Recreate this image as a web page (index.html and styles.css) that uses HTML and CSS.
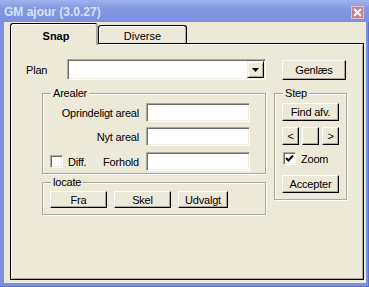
FILE: index.html
```html
<!DOCTYPE html>
<html lang="da">
<head>
    <meta charset="UTF-8" />
    <title>GM ajour (3.0.27)</title>
    <link rel="stylesheet" href="styles.css">
</head>
<body>
<div class="window">
    <div class="titlebar">
        <span class="title">GM ajour (3.0.27)</span>
        <span class="close">
            <svg width="9" height="9" viewBox="0 0 9 9"><path d="M1 1 L8 8 M8 1 L1 8" stroke="#fff" stroke-width="2"/></svg>
        </span>
    </div>

    <div class="client">
        <div class="tabs">
            <div class="tab active">Snap</div>
            <div class="tab">Diverse</div>
        </div>

        <div class="pane">
            <div class="plan-row">
                <span class="plan-label">Plan</span>
                <div class="combo">
                    <div class="combo-btn">
                        <svg width="7" height="4" viewBox="0 0 7 4"><polygon points="0,0 7,0 3.5,4" fill="#000"/></svg>
                    </div>
                </div>
                <button class="btn genlaes">Genlæs</button>
            </div>

            <div class="main-row">
                <div class="left-col">
                    <div class="group arealer">
                        <span class="group-title">Arealer</span>
                        <div class="field">
                            <span class="lbl">Oprindeligt areal</span>
                            <input class="edit" type="text">
                        </div>
                        <div class="field">
                            <span class="lbl">Nyt areal</span>
                            <input class="edit" type="text">
                        </div>
                        <div class="field last">
                            <span class="lbl split">
                                <span class="check-wrap"><span class="check"></span>Diff.</span>
                                <span>Forhold</span>
                            </span>
                            <input class="edit" type="text">
                        </div>
                    </div>

                    <div class="group locate">
                        <span class="group-title">locate</span>
                        <div class="btn-row">
                            <button class="btn w57">Fra</button>
                            <button class="btn w57">Skel</button>
                            <button class="btn w50">Udvalgt</button>
                        </div>
                    </div>
                </div>

                <div class="group step">
                    <span class="group-title">Step</span>
                    <button class="btn w57">Find afv.</button>
                    <div class="arrows">
                        <button class="btn small">&lt;</button>
                        <button class="btn small"></button>
                        <button class="btn small">&gt;</button>
                    </div>
                    <div class="check-wrap zoom">
                        <span class="check">
                            <svg width="9" height="9" viewBox="0 0 9 9"><path d="M1 4 L3.5 6.5 L8 1.5" stroke="#000" stroke-width="2" fill="none"/></svg>
                        </span>Zoom
                    </div>
                    <button class="btn w57 accept">Accepter</button>
                </div>
            </div>
        </div>
    </div>
</div>
</body>
</html>
```

FILE: styles.css
```css
body {
    margin: 0;
    background: #7a8fde;
    font-family: "Liberation Sans", Arial, sans-serif;
    font-size: 11px;
    color: #000;
}
.window {
    width: 369px;
    height: 287px;
    box-sizing: border-box;
    padding: 0 3px 4px 4px;
    background: #7b8fde;
    box-shadow: inset -1px -1px #5d70c8;
    display: flex;
    flex-direction: column;
}
.titlebar {
    height: 22px;
    margin: 0 -3px 0 -4px;
    padding: 0 5px 0 4px;
    display: flex;
    align-items: flex-start;
    background: linear-gradient(#9fb1ee, #8498e2 40%, #7b90de);
}
.title {
    margin-top: 5px;
    font-size: 12px;
    font-weight: bold;
    color: #d8e2f8;
}
.close {
    margin: 6px 0 0 auto;
    width: 13px;
    height: 13px;
    box-sizing: border-box;
    background: #c5808d;
    border: 1px solid #e2bcc6;
    display: flex;
    align-items: center;
    justify-content: center;
}
.client {
    flex: 1;
    background: #ece9d8;
}

/* tabs */
.tabs {
    display: flex;
    align-items: flex-end;
    height: 21px;
    margin-left: 6px;
}
.tab {
    box-sizing: border-box;
    text-align: center;
    background: #ece9d8;
    border-radius: 3px 3px 0 0;
}
.tab.active {
    position: relative;
    z-index: 1;
    width: 88px;
    height: 22px;
    margin-bottom: -2px;
    padding: 6px 0 0 5px;
    font-weight: bold;
    border-left: 1px solid #000;
    border-top: 1px solid #000;
    border-right: 2px solid #aca899;
    box-shadow: inset 1px 1px #fff;
}
.tab:not(.active) {
    width: 89px;
    height: 18px;
    padding-top: 4px;
    border: 1px solid #000;
    border-bottom: none;
    box-shadow: inset -1px 0 #aca899, inset 1px 1px #fff;
}
.pane {
    width: 354px;
    height: 237px;
    margin-left: 6px;
    box-sizing: border-box;
    border: 1px solid #000;
    box-shadow: inset 1px 1px #fff, inset -1px -1px #aca899;
    letter-spacing: -0.2px;
}

/* plan row */
.plan-row {
    display: flex;
    align-items: center;
    margin-top: 15px;
    padding-left: 15px;
}
.plan-label {
    width: 41px;
}
.combo {
    width: 199px;
    height: 21px;
    box-sizing: border-box;
    background: #fff;
    border: 1px solid;
    border-color: #aca899 #fff #fff #aca899;
    box-shadow: inset 1px 1px #716f64, inset -1px -1px #f1efe2;
    display: flex;
    justify-content: flex-end;
    padding: 1px;
}
.combo-btn {
    width: 17px;
    height: 17px;
    box-sizing: border-box;
    background: #ece9d8;
    border: 1px solid;
    border-color: #f1efe2 #000 #000 #f1efe2;
    box-shadow: inset 1px 1px #fff, inset -1px -1px #aca899;
    display: flex;
    align-items: center;
    justify-content: center;
}

/* buttons */
.btn {
    box-sizing: border-box;
    height: 18px;
    padding: 0;
    font: inherit;
    letter-spacing: inherit;
    background: #ece9d8;
    border: 1px solid;
    border-color: #fff #000 #000 #fff;
    box-shadow: inset -1px -1px #aca899;
}
.genlaes {
    width: 64px;
    height: 20px;
    margin-left: 16px;
}
.w57 { width: 57px; }
.w50 { width: 50px; }
.small { width: 17px; }

/* group boxes */
.main-row {
    display: flex;
    align-items: flex-start;
    gap: 8px;
    margin-top: 13px;
    padding-left: 31px;
}
.left-col {
    display: flex;
    flex-direction: column;
    gap: 8px;
}
.group {
    position: relative;
    box-sizing: border-box;
    border: 1px solid #aca899;
    box-shadow: inset 1px 1px #fff, 1px 1px #fff;
}
.group-title {
    position: absolute;
    top: -7px;
    left: 8px;
    padding: 0 2px;
    background: #ece9d8;
    line-height: 13px;
}
.arealer {
    width: 224px;
    height: 81px;
    padding: 9px 0 0 7px;
}
.field {
    display: flex;
    align-items: center;
    height: 19px;
}
.field + .field {
    margin-top: 5px;
}
.field.last {
    margin-top: 6px;
}
.lbl {
    width: 89px;
    margin-right: 7px;
    text-align: right;
}
.lbl.split {
    display: flex;
    justify-content: space-between;
    align-items: center;
    text-align: left;
}
.edit {
    width: 104px;
    height: 19px;
    margin: 0;
    padding: 0;
    box-sizing: border-box;
    background: #fff;
    border: 1px solid;
    border-color: #aca899 #fff #fff #aca899;
    box-shadow: inset 1px 1px #716f64, inset -1px -1px #f1efe2;
    outline: none;
}
.check-wrap {
    display: flex;
    align-items: center;
}
.check {
    width: 13px;
    height: 13px;
    box-sizing: border-box;
    margin-right: 5px;
    background: #fff;
    border: 1px solid;
    border-color: #aca899 #fff #fff #aca899;
    box-shadow: inset 1px 1px #716f64, inset -1px -1px #f1efe2;
    display: flex;
    align-items: center;
    justify-content: center;
}
.locate {
    width: 224px;
    height: 33px;
    padding: 8px 0 0 7px;
}
.btn-row {
    display: flex;
    gap: 7px;
}
.btn-row .btn {
    height: 17px;
}
.step {
    width: 73px;
    height: 107px;
    padding: 9px 0 0 7px;
}
.arrows {
    display: flex;
    gap: 3px;
    margin-top: 6px;
}
.zoom {
    margin: 7px 0 0 1px;
}
.accept {
    margin-top: 10px;
}
```
